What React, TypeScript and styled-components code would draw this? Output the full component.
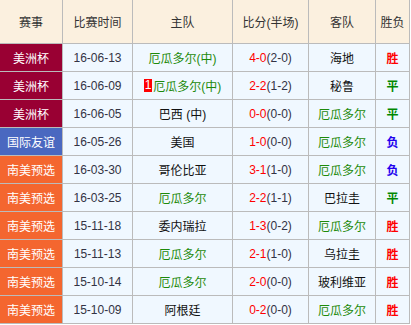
import React from "react";
import styled, { createGlobalStyle } from "styled-components";

type Result = "胜" | "平" | "负";
type League = "美洲杯" | "国际友谊" | "南美预选";

interface Match {
  league: League;
  date: string;
  home: string;
  homeRed?: number;
  score: string;
  half: string;
  away: string;
  result: Result;
}

const TEAM = "厄瓜多尔";

const matches: Match[] = [
  { league: "美洲杯", date: "16-06-13", home: "厄瓜多尔(中)", score: "4-0", half: "(2-0)", away: "海地", result: "胜" },
  { league: "美洲杯", date: "16-06-09", home: "厄瓜多尔(中)", homeRed: 1, score: "2-2", half: "(1-2)", away: "秘鲁", result: "平" },
  { league: "美洲杯", date: "16-06-05", home: "巴西 (中)", score: "0-0", half: "(0-0)", away: "厄瓜多尔", result: "平" },
  { league: "国际友谊", date: "16-05-26", home: "美国", score: "1-0", half: "(0-0)", away: "厄瓜多尔", result: "负" },
  { league: "南美预选", date: "16-03-30", home: "哥伦比亚", score: "3-1", half: "(1-0)", away: "厄瓜多尔", result: "负" },
  { league: "南美预选", date: "16-03-25", home: "厄瓜多尔", score: "2-2", half: "(1-1)", away: "巴拉圭", result: "平" },
  { league: "南美预选", date: "15-11-18", home: "委内瑞拉", score: "1-3", half: "(0-2)", away: "厄瓜多尔", result: "胜" },
  { league: "南美预选", date: "15-11-13", home: "厄瓜多尔", score: "2-1", half: "(1-0)", away: "乌拉圭", result: "胜" },
  { league: "南美预选", date: "15-10-14", home: "厄瓜多尔", score: "2-0", half: "(0-0)", away: "玻利维亚", result: "胜" },
  { league: "南美预选", date: "15-10-09", home: "阿根廷", score: "0-2", half: "(0-0)", away: "厄瓜多尔", result: "胜" },
];

const leagueColors: Record<League, string> = {
  美洲杯: "#990033",
  国际友谊: "#4a68c0",
  南美预选: "#f4662f",
};

const resultColors: Record<Result, string> = {
  胜: "#ff0000",
  平: "#008800",
  负: "#2200ee",
};

const GlobalStyle = createGlobalStyle`
  body {
    margin: 0;
    background: #fff;
    font-family: "Liberation Sans", "Noto Sans CJK SC", sans-serif;
    font-size: 12px;
  }
`;

const Grid = styled.div`
  display: grid;
  grid-template-columns: 62px 69px 99px 75px 66px 33px;
  grid-auto-rows: 27px;
  grid-template-rows: 43px;
  gap: 1px;
  width: 410px;
  padding: 0 1px 1px 0;
  box-sizing: border-box;
  background: #bbbbbb;
`;

const HeadCell = styled.div`
  display: flex;
  align-items: center;
  justify-content: center;
  background: #fbf0df;
  color: #333;
  font-size: 12px;
`;

const Cell = styled.div`
  display: flex;
  align-items: center;
  justify-content: center;
  background: #f0f8ff;
  color: #222;
  white-space: nowrap;
`;

const LeagueCell = styled(Cell)<{ $bg: string }>`
  background: ${(p) => p.$bg};
  color: #fff;
`;

const DateCell = styled(Cell)`
  color: #333344;
`;

const Team = styled.span<{ $ours: boolean }>`
  color: ${(p) => (p.$ours ? "#1d8a0a" : "#111")};
`;

const RedCard = styled.span`
  display: inline-block;
  background: #ff0000;
  color: #fff;
  font-size: 12px;
  line-height: 13px;
  padding: 0 1px;
  margin-right: 1px;
`;

const Score = styled.span`
  color: #ff0000;
`;

const Half = styled.span`
  color: #333344;
`;

const ResultCell = styled(Cell)<{ $color: string }>`
  color: ${(p) => p.$color};
  font-weight: bold;
`;

const headers = ["赛事", "比赛时间", "主队", "比分(半场)", "客队", "胜负"];

const App: React.FC = () => {
  return (
    <>
      <GlobalStyle />
      <Grid>
        {headers.map((h) => (
          <HeadCell key={h}>{h}</HeadCell>
        ))}
        {matches.map((m, i) => (
          <React.Fragment key={i}>
            <LeagueCell $bg={leagueColors[m.league]}>{m.league}</LeagueCell>
            <DateCell>{m.date}</DateCell>
            <Cell>
              {m.homeRed ? <RedCard>{m.homeRed}</RedCard> : null}
              <Team $ours={m.home.startsWith(TEAM)}>{m.home}</Team>
            </Cell>
            <Cell>
              <Score>{m.score}</Score>
              <Half>{m.half}</Half>
            </Cell>
            <Cell>
              <Team $ours={m.away.startsWith(TEAM)}>{m.away}</Team>
            </Cell>
            <ResultCell $color={resultColors[m.result]}>{m.result}</ResultCell>
          </React.Fragment>
        ))}
      </Grid>
    </>
  );
};

export default App;
